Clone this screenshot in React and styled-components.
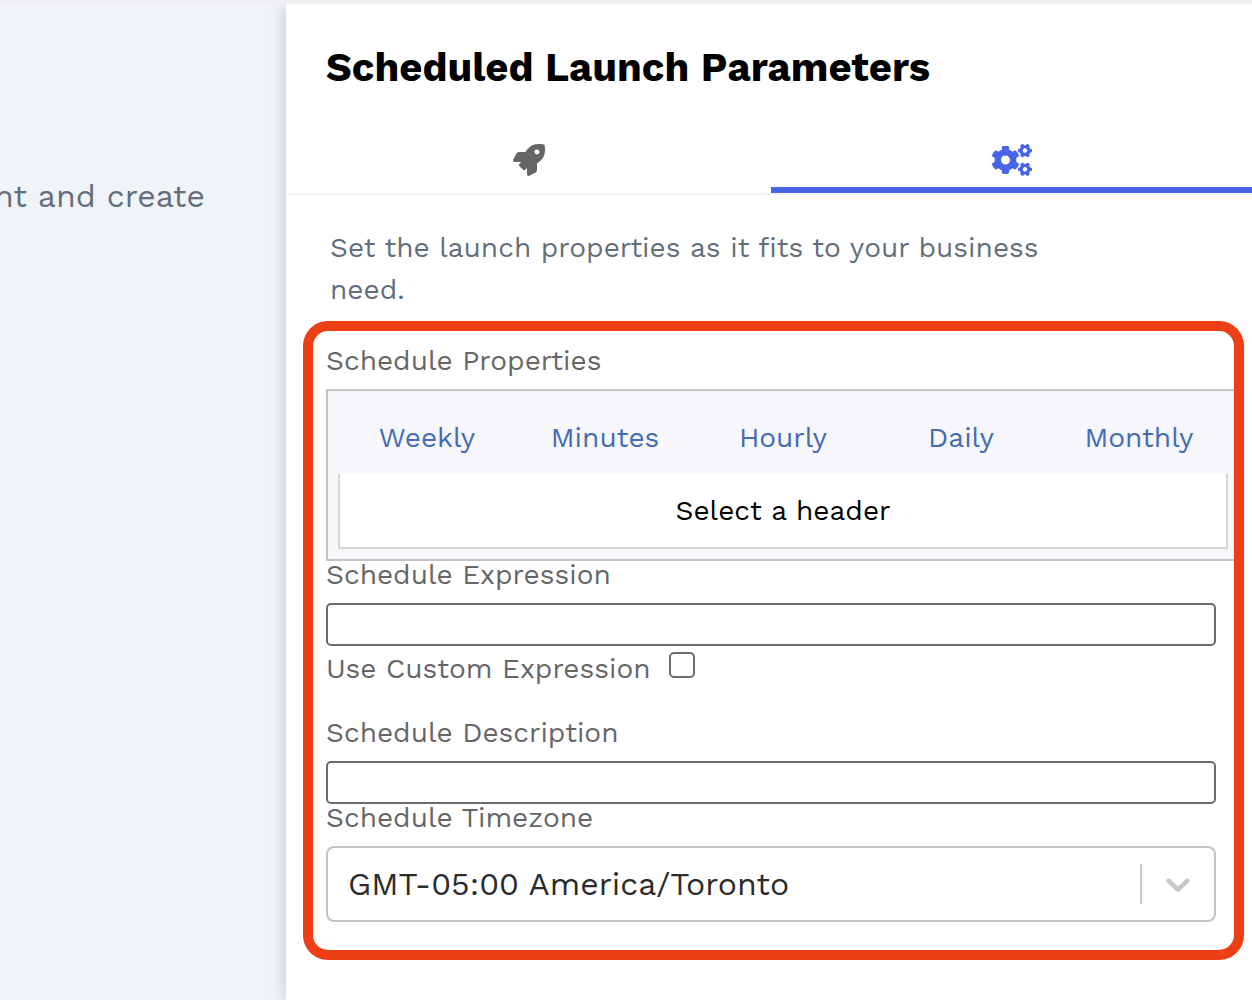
import { useState } from 'react'
import styled, { createGlobalStyle } from 'styled-components'
import { FaCogs, FaRocket } from 'react-icons/fa'


const GlobalStyle = createGlobalStyle`
    * {
        box-sizing: border-box;
    }
    body {
        margin: 0;
        background-color: #f0f3f8;
        font-family: 'Work Sans', Inter, 'Liberation Sans', sans-serif;
    }
    button, input, select {
        font-family: inherit;
    }
`
const Page = styled.div`
    display: flex;
    min-height: 100vh;
    border-top: 4px solid #efeef0;
    background-color: #f0f3f8;
`
const Side = styled.aside`
    width: 286px;
    flex-shrink: 0;
    padding: 168px 81px 0 0;
    overflow: hidden;
`
const SideText = styled.p`
    display: flex;
    justify-content: flex-end;
    margin: 0;
    font-size: 32px;
    line-height: 48px;
    white-space: nowrap;
    color: #636e7b;
`
const Panel = styled.main`
    flex: 1;
    min-width: 0;
    background-color: white;
    box-shadow: 0 0 16px rgba(60, 65, 80, .25);
    clip-path: inset(0 0 0 -20px);
`
const Title = styled.h1`
    margin: 40px 40px 35px;
    font-size: 40px;
    line-height: 48px;
    font-weight: 700;
    color: black;
`
const Steps = styled.nav`
    display: flex;
    gap: 2px;
    margin-left: 2px;
    border-bottom: 2px solid #f1f5f9;
`
const Step = styled.button`
    flex: 1;
    display: flex;
    align-items: center;
    justify-content: center;
    height: 66px;
    padding: 6px 0 0;
    border: none;
    border-bottom: 6px solid ${props => props.$active ? '#4863e8' : 'transparent'};
    background: none;
    color: ${props => props.$active ? '#4863e8' : '#666666'};
    cursor: pointer;

    svg {
        width: ${props => props.$wide ? '40px' : '32px'};
        height: 32px;
    }
`
const Description = styled.p`
    max-width: 760px;
    margin: 32px 0 10px 44px;
    font-size: 28px;
    line-height: 42px;
    color: #636e7b;
`
const Form = styled.form`
    margin: 0 8px 40px 17px;
    padding: 16px 18px 28px 13px;
    border: 10px solid #ec3f16;
    border-radius: 25px;
    overflow: hidden;
`
const Label = styled.label`
    display: block;
    margin-bottom: 14px;
    font-size: 28px;
    line-height: 28px;
    color: #666666;
`
const Cron = styled.div`
    margin-right: -24px;
    padding: 10px;
    border: 2px solid #c6c3c6;
    background-color: #f6f6fb;
`
const CronTabs = styled.div`
    display: grid;
    grid-template-columns: repeat(5, 1fr);
`
const CronTab = styled.button`
    height: 73px;
    padding: 0;
    border: none;
    background: none;
    font-size: 28px;
    color: #436cb3;
    cursor: pointer;
`
const CronBody = styled.div`
    height: 75px;
    border: 2px solid #d6d6d6;
    border-top: none;
    background-color: white;
    font-size: 28px;
    line-height: 73px;
    text-align: center;
    color: black;
`
const Input = styled.input`
    display: block;
    width: 100%;
    height: 43px;
    padding: 0 8px;
    border: 2px solid #6b6b6b;
    border-radius: 5px;
    background-color: white;
    font-size: 28px;
`
const CheckRow = styled.div`
    display: flex;
    align-items: flex-start;
    gap: 18px;
    height: 73px;
    padding-top: 6px;
`
const CheckLabel = styled(Label)`
    margin: 0;
    line-height: 34px;
`
const Checkbox = styled.input`
    appearance: none;
    width: 26px;
    height: 26px;
    margin: 0;
    border: 2px solid #6b6b6b;
    border-radius: 5px;
    background-color: ${props => props.checked ? '#4863e8' : 'white'};
`
const SelectBox = styled.div`
    display: flex;
    align-items: center;
    height: 76px;
    border: 2px solid #c4c4c4;
    border-radius: 8px;
`
const Select = styled.select`
    appearance: none;
    flex: 1;
    min-width: 0;
    height: 100%;
    padding: 0 20px;
    border: none;
    outline: none;
    background: none;
    font-size: 32px;
    color: #2b2b2b;
`
const Separator = styled.span`
    width: 2px;
    height: 40px;
    background-color: #c8c8c8;
`
const Chevron = styled.svg`
    width: 40px;
    height: 40px;
    margin: 0 16px;
    fill: #c8c8c8;
`

const periods = ['Weekly', 'Minutes', 'Hourly', 'Daily', 'Monthly']

const App = () => {
    const [step, setStep] = useState('properties')
    const [expression, setExpression] = useState('')
    const [custom, setCustom] = useState(false)
    const [description, setDescription] = useState('')

    return (
        <>
            <GlobalStyle />
            <Page>
                <Side>
                    <SideText>nt and create</SideText>
                </Side>
                <Panel>
                    <Title>Scheduled Launch Parameters</Title>
                    <Steps>
                        <Step aria-label='Launch' $active={step === 'launch'} onClick={() => setStep('launch')}>
                            <FaRocket />
                        </Step>
                        <Step aria-label='Properties' $wide $active={step === 'properties'} onClick={() => setStep('properties')}>
                            <FaCogs />
                        </Step>
                    </Steps>
                    <Description>Set the launch properties as it fits to your business need.</Description>
                    <Form>
                        <Label as='div' id='properties'>Schedule Properties</Label>
                        <Cron role='group' aria-labelledby='properties'>
                            <CronTabs>
                                {periods.map(period => (
                                    <CronTab type='button' key={period}>{period}</CronTab>
                                ))}
                            </CronTabs>
                            <CronBody>Select a header</CronBody>
                        </Cron>
                        <Label htmlFor='expression'>Schedule Expression</Label>
                        <Input id='expression' value={expression} onChange={(e) => setExpression(e.target.value)} />
                        <CheckRow>
                            <CheckLabel htmlFor='custom'>Use Custom Expression</CheckLabel>
                            <Checkbox id='custom' type='checkbox' checked={custom} onChange={(e) => setCustom(e.target.checked)} />
                        </CheckRow>
                        <Label htmlFor='description'>Schedule Description</Label>
                        <Input id='description' value={description} onChange={(e) => setDescription(e.target.value)} />
                        <Label htmlFor='timezone'>Schedule Timezone</Label>
                        <SelectBox>
                            <Select id='timezone' defaultValue='America/Toronto'>
                                <option value='America/Toronto'>GMT-05:00 America/Toronto</option>
                            </Select>
                            <Separator />
                            <Chevron viewBox='0 0 20 20' aria-hidden='true'>
                                <path d='M4.516 7.548c0.436-0.446 1.043-0.481 1.576 0l3.908 3.747 3.908-3.747c0.533-0.481 1.141-0.446 1.574 0 0.436 0.445 0.408 1.197 0 1.615-0.406 0.418-4.695 4.502-4.695 4.502-0.217 0.223-0.502 0.335-0.787 0.335s-0.57-0.112-0.789-0.335c0 0-4.287-4.084-4.695-4.502s-0.436-1.17 0-1.615z' />
                            </Chevron>
                        </SelectBox>
                    </Form>
                </Panel>
            </Page>
        </>
    )
}

export default App
